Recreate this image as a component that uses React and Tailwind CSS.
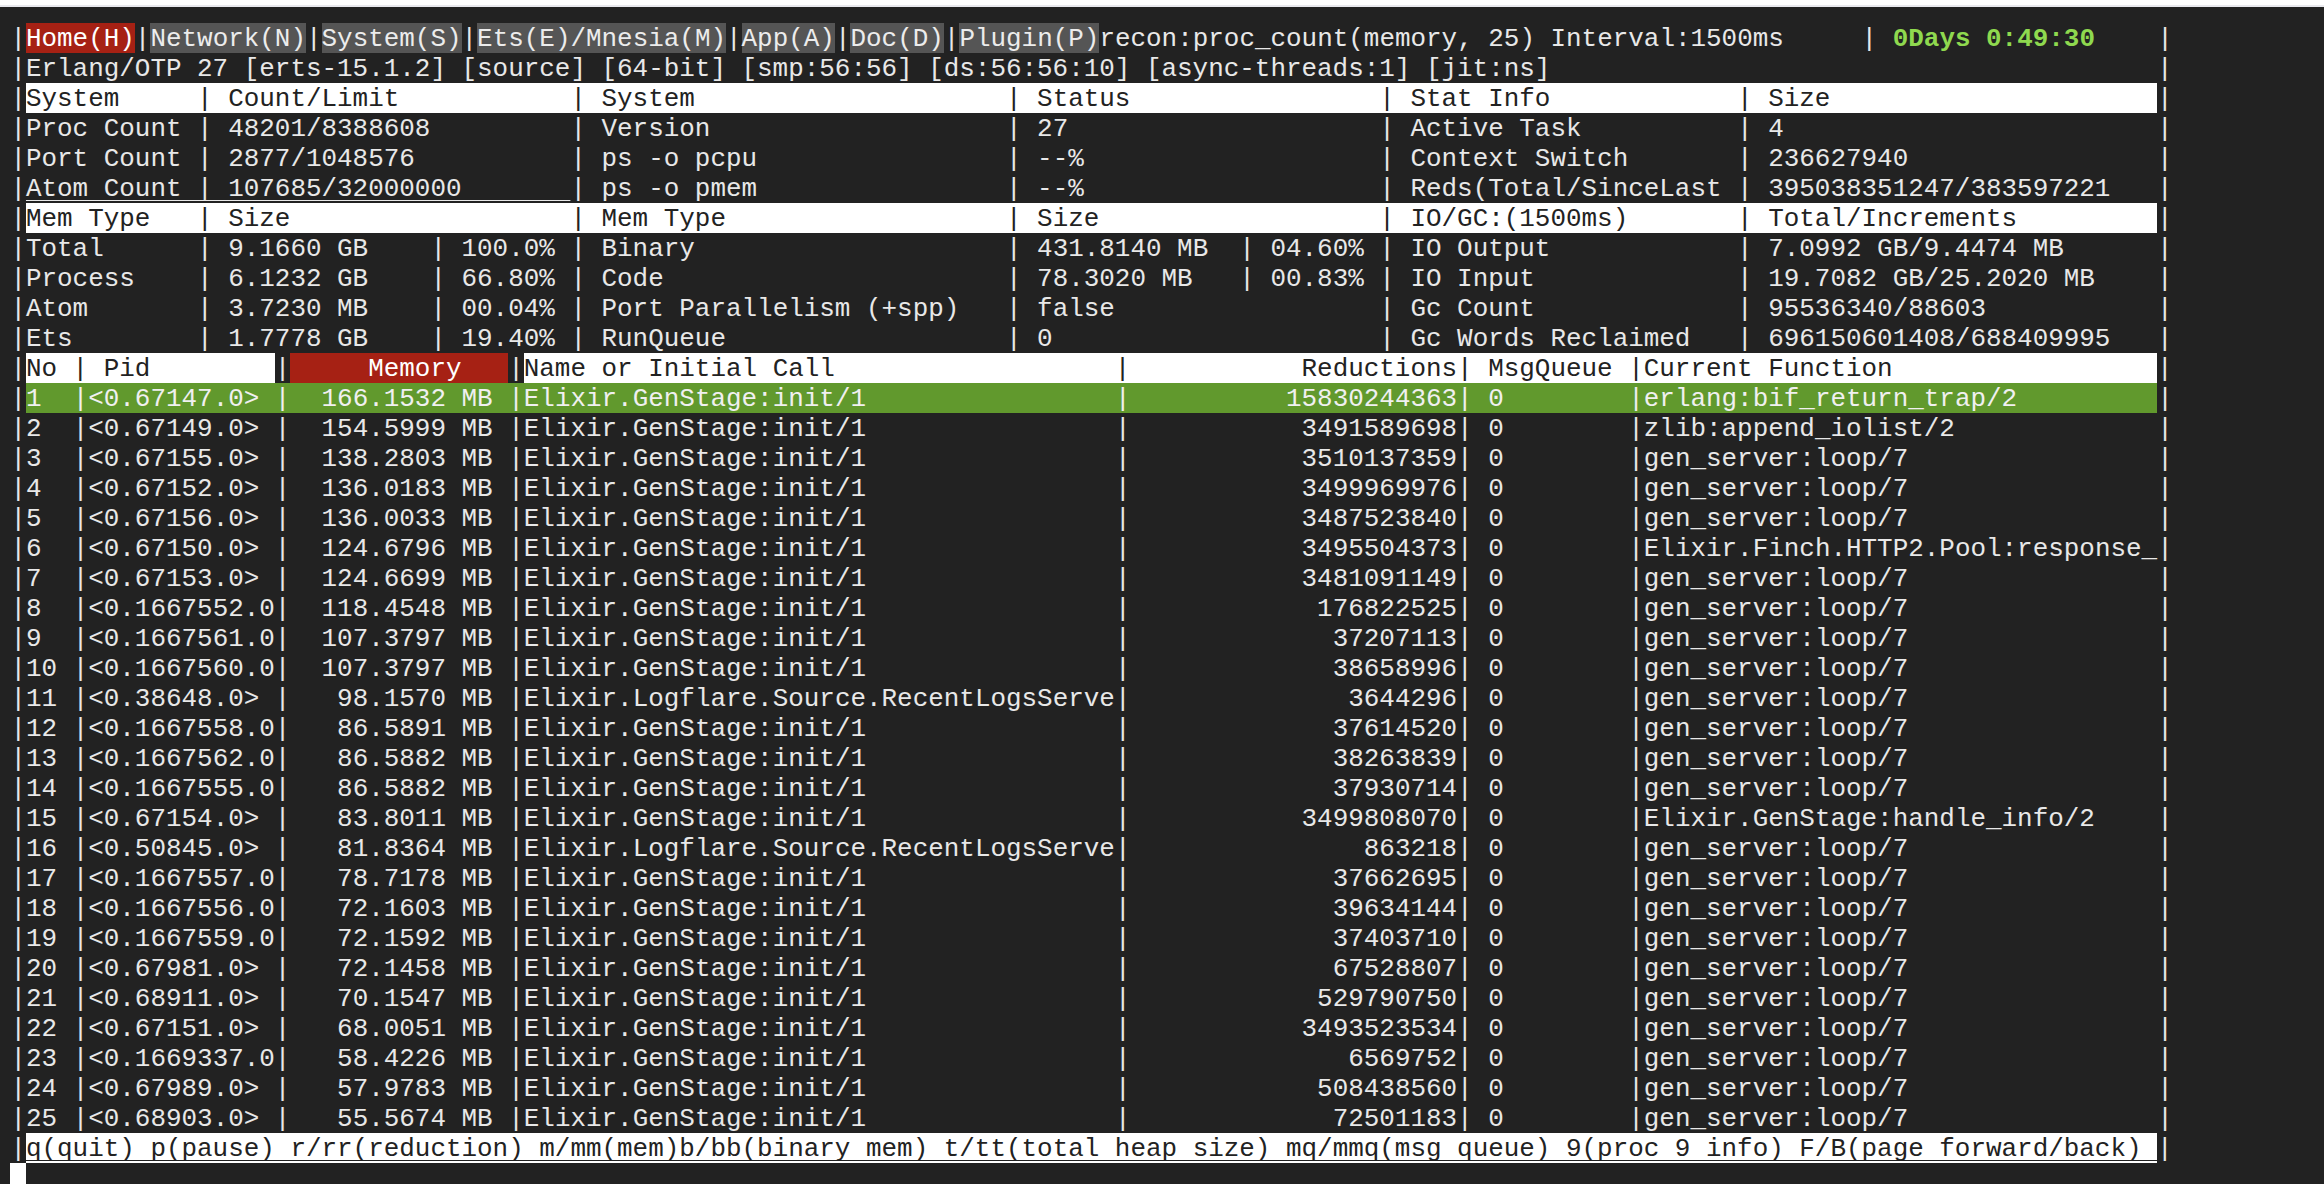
const at = (segs) => {
    // lay text out by terminal column
    let line = '';
    segs.forEach(([col, text]) => {
        line = line.padEnd(col, ' ') + text;
    });
    return line;
};

const sysRows = [
    ['Proc Count', '48201/8388608', 'Version', '27', 'Active Task', '4'],
    ['Port Count', '2877/1048576', 'ps -o pcpu', '--%', 'Context Switch', '236627940'],
    ['Atom Count', '107685/32000000', 'ps -o pmem', '--%', 'Reds(Total/SinceLast', '395038351247/383597221']
];

const memRows = [
    ['Total', '9.1660 GB', '100.0%', 'Binary', '431.8140 MB', '04.60%', 'IO Output', '7.0992 GB/9.4474 MB'],
    ['Process', '6.1232 GB', '66.80%', 'Code', '78.3020 MB', '00.83%', 'IO Input', '19.7082 GB/25.2020 MB'],
    ['Atom', '3.7230 MB', '00.04%', 'Port Parallelism (+spp)', 'false', '', 'Gc Count', '95536340/88603'],
    ['Ets', '1.7778 GB', '19.40%', 'RunQueue', '0', '', 'Gc Words Reclaimed', '696150601408/688409995']
];

const F = 'Elixir.GenStage:init/1';
const L = 'Elixir.Logflare.Source.RecentLogsServe';
const G = 'gen_server:loop/7';

const procs = [
    ['<0.67147.0>', '166.1532', F, '15830244363', 'erlang:bif_return_trap/2'],
    ['<0.67149.0>', '154.5999', F, '3491589698', 'zlib:append_iolist/2'],
    ['<0.67155.0>', '138.2803', F, '3510137359', G],
    ['<0.67152.0>', '136.0183', F, '3499969976', G],
    ['<0.67156.0>', '136.0033', F, '3487523840', G],
    ['<0.67150.0>', '124.6796', F, '3495504373', 'Elixir.Finch.HTTP2.Pool:response_'],
    ['<0.67153.0>', '124.6699', F, '3481091149', G],
    ['<0.1667552.0', '118.4548', F, '176822525', G],
    ['<0.1667561.0', '107.3797', F, '37207113', G],
    ['<0.1667560.0', '107.3797', F, '38658996', G],
    ['<0.38648.0>', '98.1570', L, '3644296', G],
    ['<0.1667558.0', '86.5891', F, '37614520', G],
    ['<0.1667562.0', '86.5882', F, '38263839', G],
    ['<0.1667555.0', '86.5882', F, '37930714', G],
    ['<0.67154.0>', '83.8011', F, '3499808070', 'Elixir.GenStage:handle_info/2'],
    ['<0.50845.0>', '81.8364', L, '863218', G],
    ['<0.1667557.0', '78.7178', F, '37662695', G],
    ['<0.1667556.0', '72.1603', F, '39634144', G],
    ['<0.1667559.0', '72.1592', F, '37403710', G],
    ['<0.67981.0>', '72.1458', F, '67528807', G],
    ['<0.68911.0>', '70.1547', F, '529790750', G],
    ['<0.67151.0>', '68.0051', F, '3493523534', G],
    ['<0.1669337.0', '58.4226', F, '6569752', G],
    ['<0.67989.0>', '57.9783', F, '508438560', G],
    ['<0.68903.0>', '55.5674', F, '72501183', G]
];

const Row = ({ children }) => <div className="h-[30px]">{children}</div>;

const Cell = ({ className, children }) => (
    <span className={'inline-block h-[30px] align-top ' + (className ?? '')}>{children}</span>
);

const Light = ({ children }) => <Cell className="bg-white text-[#222222]">{children}</Cell>;
const Tab = ({ children }) => <Cell className="bg-[#555555] text-[#ececec]">{children}</Cell>;

const sysLine = (r) =>
    at([[0, r[0]], [11, '|'], [13, r[1]], [35, '|'], [37, r[2]], [63, '|'], [65, r[3]], [87, '|'], [89, r[4]], [110, '|'], [112, r[5]]]);

const memLine = (r) =>
    at([
        [0, r[0]], [11, '|'], [13, r[1]], [26, '|'], [28, r[2]], [35, '|'], [37, r[3]], [63, '|'], [65, r[4]],
        ...(r[5] ? [[78, '|'], [80, r[5]]] : []),
        [87, '|'], [89, r[6]], [110, '|'], [112, r[7]]
    ]);

const procRest = (p) =>
    at([[0, p[2]], [38, '|'], [60 - p[3].length, p[3]], [60, '|'], [62, '0'], [71, '|'], [72, p[4]]]).padEnd(105);

const memCell = (m) => (m + ' MB').padStart(13) + ' ';

export default function App() {
    return (
        <div className="min-h-screen w-full overflow-hidden bg-[#222222] font-['Liberation_Mono',monospace] text-[25.93px] leading-[32px] whitespace-pre text-[#e8e8e8]">
            <div className="h-[5px] bg-white" />
            <div className="h-[2px] bg-[#e9e9ee]" />
            <div className="pl-[10.4px] pt-[16px]">
                <Row>
                    |<Cell className="bg-[#a62114] text-white">Home(H)</Cell>|<Tab>Network(N)</Tab>|<Tab>System(S)</Tab>|
                    <Tab>Ets(E)/Mnesia(M)</Tab>|<Tab>App(A)</Tab>|<Tab>Doc(D)</Tab>|<Tab>Plugin(P)</Tab>
                    {'recon:proc_count(memory, 25) Interval:1500ms     | '}
                    <span className="font-bold text-[#8fd94f]">0Days 0:49:30</span>
                    {'    |'}
                </Row>
                <Row>{at([[0, '|'], [1, 'Erlang/OTP 27 [erts-15.1.2] [source] [64-bit] [smp:56:56] [ds:56:56:10] [async-threads:1] [jit:ns]'], [138, '|']])}</Row>
                <Row>
                    |<Light>{sysLine(['System', 'Count/Limit', 'System', 'Status', 'Stat Info', 'Size']).padEnd(137)}</Light>|
                </Row>
                {sysRows.map((r, i) => (
                    <Row key={r[0]}>
                        |
                        {i === 2 ? (
                            <>
                                <span className="underline decoration-1 underline-offset-[4px] [text-decoration-skip-ink:none]">{sysLine(r).slice(0, 35)}</span>
                                {sysLine(r).slice(35).padEnd(102)}
                            </>
                        ) : (
                            sysLine(r).padEnd(137)
                        )}
                        |
                    </Row>
                ))}
                <Row>
                    |<Light>{sysLine(['Mem Type', 'Size', 'Mem Type', 'Size', 'IO/GC:(1500ms)', 'Total/Increments']).padEnd(137)}</Light>|
                </Row>
                {memRows.map((r) => (
                    <Row key={r[0]}>|{memLine(r).padEnd(137)}|</Row>
                ))}
                <Row>
                    |<Light>{at([[0, 'No'], [3, '|'], [5, 'Pid']]).padEnd(16)}</Light>|
                    <Cell className="bg-[#a62114] text-white">{'     Memory   '}</Cell>|
                    <Light>
                        {at([[0, 'Name or Initial Call'], [38, '|'], [50, 'Reductions'], [60, '|'], [62, 'MsgQueue'], [71, '|'], [72, 'Current Function']]).padEnd(105)}
                    </Light>|
                </Row>
                {procs.map((p, i) => {
                    const cells = (
                        <>
                            {String(i + 1).padEnd(3)}|{p[0].padEnd(12)}|{memCell(p[1])}|{procRest(p)}
                        </>
                    );
                    return (
                        <Row key={p[0]}>
                            |{i === 0 ? <Cell className="bg-[#61992d] text-[#f0f0f0]">{cells}</Cell> : cells}|
                        </Row>
                    );
                })}
                <Row>
                    |
                    <Cell className="bg-white text-[#222222]">
                        <span className="underline decoration-1 underline-offset-[4px] [text-decoration-skip-ink:none]">
                            {'q(quit) p(pause) r/rr(reduction) m/mm(mem)b/bb(binary mem) t/tt(total heap size) mq/mmq(msg queue) 9(proc 9 info) F/B(page forward/back)'.padEnd(137)}
                        </span>
                    </Cell>
                    |
                </Row>
                <div className="h-[21px] w-[15.56px] bg-white" />
            </div>
        </div>
    );
}
